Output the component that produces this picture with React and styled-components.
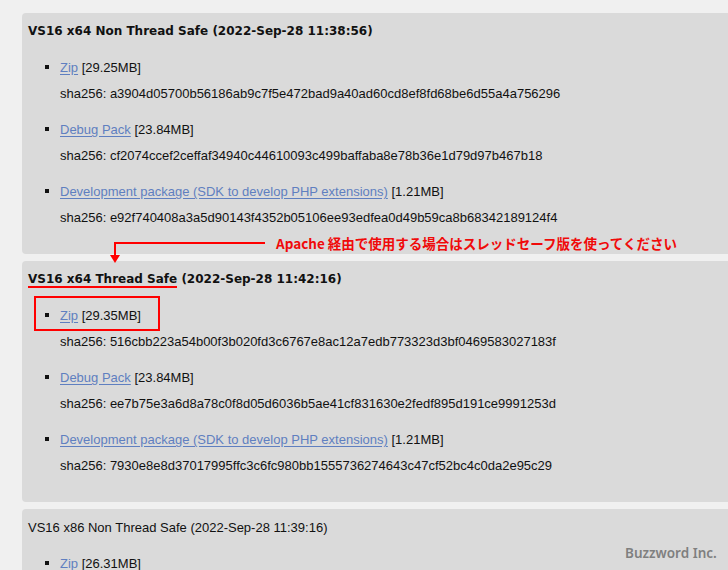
import React from "react";
import styled, { createGlobalStyle } from "styled-components";

const GlobalStyle = createGlobalStyle`
  html, body {
    margin: 0;
    padding: 0;
    background: #f0f0f0;
    overflow: hidden;
  }
  body {
    font-family: "Liberation Sans", Arial, sans-serif;
    font-size: 13px;
    color: #111;
  }
`;

const Page = styled.div`
  position: relative;
  padding: 13px 0 0 22px;
  display: flex;
  flex-direction: column;
  gap: 7px;
`;

const Panel = styled.section`
  background: #dadada;
  border-radius: 4px 0 0 4px;
  padding: 10px 0 9px 6px;
  display: flex;
  flex-direction: column;
  gap: 19px;
`;

const Heading = styled.h3`
  margin: 0;
  font-family: ${(p) => (p.$bold ? '"DejaVu Sans", Verdana, sans-serif' : '"Liberation Sans", Arial, sans-serif')};
  font-size: ${(p) => (p.$bold ? "12px" : "13px")};
  font-weight: ${(p) => (p.$bold ? 700 : 400)};
  line-height: 17px;
  color: #111;
`;

const Marked = styled.span`
  border-bottom: 2px solid #ff0000;
`;

const List = styled.ul`
  list-style: none;
  margin: 0;
  padding: 0 0 19px 32px;
  display: flex;
  flex-direction: column;
  gap: 19px;
`;

const Item = styled.li`
  display: flex;
  flex-direction: column;
  gap: 9px;
  line-height: 17px;
`;

const ItemHead = styled.div`
  position: relative;
  &::before {
    content: "";
    display: inline-block;
    width: 4px;
    height: 4px;
    background: #111;
    margin-left: -15px;
    margin-right: 11px;
    vertical-align: 3px;
  }
`;

const Link = styled.a`
  color: #5f7fc0;
  text-decoration: underline;
  text-underline-offset: 2px;
`;

const Hash = styled.p`
  margin: 0;
`;

const Highlight = styled.span`
  position: absolute;
  left: -26px;
  top: -11px;
  width: 126px;
  height: 35px;
  box-sizing: border-box;
  border: 2px solid #ff0000;
  pointer-events: none;
`;

const Callout = styled.div`
  position: absolute;
  left: 108px;
  top: 241px;
  display: flex;
  align-items: flex-start;
  gap: 8px;
  pointer-events: none;
`;

const Note = styled.span`
  margin-top: -8px;
  line-height: 20px;
  font-family: "Noto Sans CJK JP", sans-serif;
  font-size: 13.5px;
  font-weight: 700;
  color: #f00a0a;
  white-space: nowrap;
`;

const Watermark = styled.span`
  position: absolute;
  left: 625px;
  top: 543px;
  line-height: 20px;
  font-family: "Noto Sans", sans-serif;
  font-size: 13.5px;
  font-weight: 600;
  color: #7f7f7f;
  white-space: nowrap;
`;

const DEV = "Development package (SDK to develop PHP extensions)";

const panels = [
  {
    title: "VS16 x64 Non Thread Safe",
    date: "(2022-Sep-28 11:38:56)",
    bold: true,
    items: [
      { name: "Zip", size: "29.25MB", sha: "a3904d05700b56186ab9c7f5e472bad9a40ad60cd8ef8fd68be6d55a4a756296" },
      { name: "Debug Pack", size: "23.84MB", sha: "cf2074ccef2ceffaf34940c44610093c499baffaba8e78b36e1d79d97b467b18" },
      { name: DEV, size: "1.21MB", sha: "e92f740408a3a5d90143f4352b05106ee93edfea0d49b59ca8b68342189124f4" },
    ],
  },
  {
    title: "VS16 x64 Thread Safe",
    date: "(2022-Sep-28 11:42:16)",
    bold: true,
    marked: true,
    items: [
      { name: "Zip", size: "29.35MB", sha: "516cbb223a54b00f3b020fd3c6767e8ac12a7edb773323d3bf0469583027183f", highlight: true },
      { name: "Debug Pack", size: "23.84MB", sha: "ee7b75e3a6d8a78c0f8d05d6036b5ae41cf831630e2fedf895d191ce9991253d" },
      { name: DEV, size: "1.21MB", sha: "7930e8e8d37017995ffc3c6fc980bb1555736274643c47cf52bc4c0da2e95c29" },
    ],
  },
  {
    title: "VS16 x86 Non Thread Safe",
    date: "(2022-Sep-28 11:39:16)",
    bold: false,
    items: [
      { name: "Zip", size: "26.31MB", sha: "" },
    ],
  },
];

export default function App() {
  return (
    <>
      <GlobalStyle />
      <Page>
        {panels.map((p) => (
          <Panel key={p.title}>
            <Heading $bold={p.bold}>
              {p.marked ? <Marked>{p.title}</Marked> : p.title} {p.date}
            </Heading>
            <List>
              {p.items.map((it) => (
                <Item key={it.name}>
                  <ItemHead>
                    <Link href="#">{it.name}</Link> [{it.size}]
                    {it.highlight && <Highlight />}
                  </ItemHead>
                  {it.sha && <Hash>sha256: {it.sha}</Hash>}
                </Item>
              ))}
            </List>
          </Panel>
        ))}
        <Callout>
          <svg width="160" height="26" viewBox="0 0 160 26">
            <path d="M7 2 H157" stroke="#ff0000" strokeWidth="2" fill="none" />
            <path d="M7 1 V15" stroke="#ff0000" strokeWidth="2" fill="none" />
            <path d="M2 14 H12 L7 22 Z" fill="#ff0000" />
          </svg>
          <Note>Apache 経由で使用する場合はスレッドセーフ版を使ってください</Note>
        </Callout>
        <Watermark>Buzzword Inc.</Watermark>
      </Page>
    </>
  );
}
